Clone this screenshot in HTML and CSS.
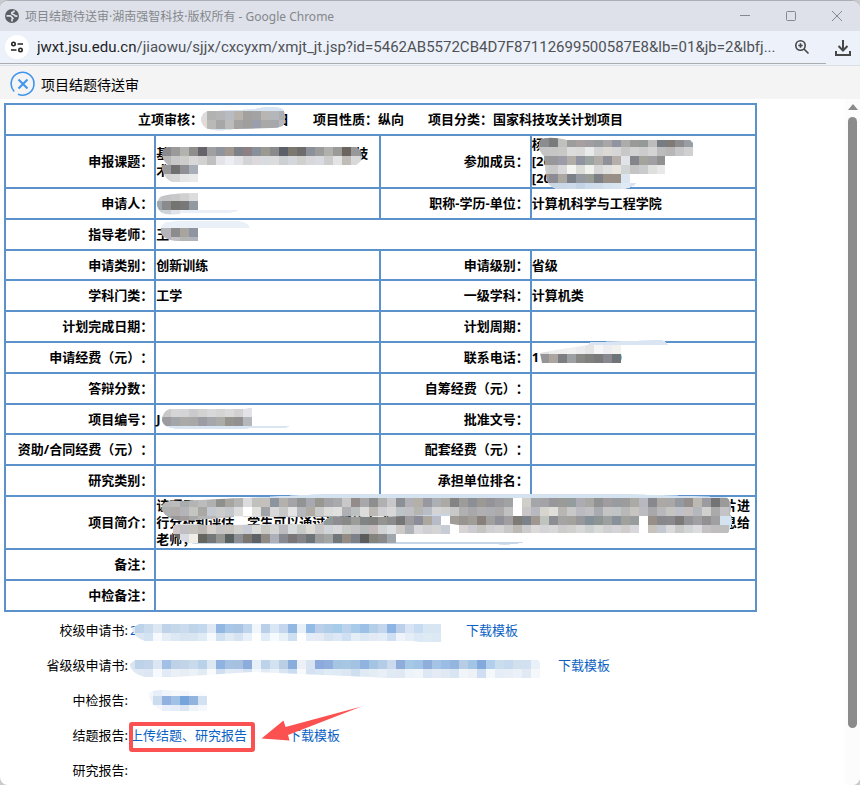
FILE: index.html
```html
<!DOCTYPE html>
<html lang="zh-CN">
<head>
<meta charset="utf-8">
<title>项目结题待送审·湖南强智科技·版权所有</title>
<link rel="stylesheet" href="styles.css">
</head>
<body>
<div class="window">
  <header class="titlebar">
    <svg class="globe" viewBox="0 0 14 14" aria-hidden="true"><circle cx="7" cy="7" r="7" fill="#5b5f64"/><path d="M1.500 6.800H5.200C6.800 6.800 6.500 9 8 9M7 12.500V10.300C7 9.500 8.300 9.700 8.300 8.700M9.300 1.500C9.300 3.600 6.600 2.600 6.600 4.300 6.600 6 9.200 5 9.700 6.400 10.100 7.500 11.300 7 12.500 7" fill="none" stroke="#dee1e9" stroke-width="1.700"/></svg>
    <span class="caption">项目结题待送审·湖南强智科技·版权所有 - Google Chrome</span>
    <div class="controls">
      <button type="button" aria-label="最小化"><svg viewBox="0 0 12 12"><path d="M1 5.500h10"/></svg></button>
      <button type="button" aria-label="最大化"><svg viewBox="0 0 12 12"><rect x="1.500" y="1.500" width="9" height="9" rx="1"/></svg></button>
      <button type="button" aria-label="关闭"><svg viewBox="0 0 12 12"><path d="M1 1l10 10M11 1L1 11"/></svg></button>
    </div>
  </header>
  <div class="addressbar">
    <div class="address">
      <button type="button" class="site" aria-label="网站信息"><svg viewBox="0 0 14 14"><circle cx="3.500" cy="4" r="1.700"/><path d="M7.500 4H13M1 10h5.500"/><circle cx="10.500" cy="10" r="1.700"/></svg></button>
      <span class="url"><b>jwxt.jsu.edu.cn</b>/jiaowu/sjjx/cxcyxm/xmjt_jt.jsp?id=5462AB5572CB4D7F87112699500587E8&amp;lb=01&amp;jb=2&amp;lbfj...</span>
      <button type="button" class="tool" aria-label="缩放"><svg viewBox="0 0 16 16"><circle cx="6.500" cy="6.500" r="4.700"/><path d="M10 10l4.500 4.500M4.300 6.500h4.400M6.500 4.300v4.400"/></svg></button>
    </div>
    <button type="button" class="download" aria-label="下载"><svg viewBox="0 0 18 18"><path d="M9 1v10M4.500 7L9 11.500 13.500 7M2 12v4h14v-4"/></svg></button>
  </div>
  <div class="heading">
    <svg viewBox="0 0 26 26" aria-hidden="true"><path d="M4.200 20.500A11.400 11.400 0 1 1 8 23.200" fill="none" stroke="#3f94ee" stroke-width="1.600"/><path d="M8.500 8.500l9 9M17.500 8.500l-9 9" stroke="#3f94ee" stroke-width="2"/></svg>
    <h1>项目结题待送审</h1>
  </div>
  <div class="body">
    <main>
      <table>
        <colgroup><col class="label"><col class="value"><col class="label"><col class="value"></colgroup>
        <tbody>
          <tr><td colspan="4"><div class="summary"><span class="review"><span>立项审核：</span><span>日</span></span><span>项目性质：纵向</span><span>项目分类：国家科技攻关计划项目</span></div></td></tr>
          <tr><th>申报课题：</th><td><div class="line topic"><span>基</span><span>技</span></div><div class="line">术</div></td><th>参加成员：</th><td>杨<br>[20<br>[20</td></tr>
          <tr><th>申请人：</th><td></td><th>职称-学历-单位：</th><td>计算机科学与工程学院</td></tr>
          <tr><th>指导老师：</th><td colspan="3">王</td></tr>
          <tr class="compact"><th>申请类别：</th><td>创新训练</td><th>申请级别：</th><td>省级</td></tr>
          <tr><th>学科门类：</th><td>工学</td><th>一级学科：</th><td>计算机类</td></tr>
          <tr><th>计划完成日期：</th><td></td><th>计划周期：</th><td></td></tr>
          <tr><th>申请经费（元）：</th><td></td><th>联系电话：</th><td><div class="line phone"><span>1</span><span>0</span></div></td></tr>
          <tr><th>答辩分数：</th><td></td><th>自筹经费（元）：</th><td></td></tr>
          <tr class="compact"><th>项目编号：</th><td>J</td><th>批准文号：</th><td></td></tr>
          <tr><th>资助/合同经费（元）：</th><td></td><th>配套经费（元）：</th><td></td></tr>
          <tr><th>研究类别：</th><td></td><th>承担单位排名：</th><td></td></tr>
          <tr><th>项目简介：</th><td colspan="3"><div class="line brief"><span>该项目</span><span>片进</span></div><div class="line brief"><span>行分析和评估　学生可以通过问题的方式</span><span>息给</span></div><div class="line">老师，</div></td></tr>
          <tr><th>备注：</th><td colspan="3"></td></tr>
          <tr><th>中检备注：</th><td colspan="3"></td></tr>
        </tbody>
      </table>
      <dl class="files">
        <div><dt>校级申请书:</dt><dd><a href="#" class="school">2</a><a href="#">下载模板</a></dd></div>
        <div><dt>省级级申请书:</dt><dd><span class="province"></span><a href="#">下载模板</a></dd></div>
        <div><dt>中检报告:</dt><dd></dd></div>
        <div><dt>结题报告:</dt><dd><a href="#" class="upload">上传结题、研究报告</a><a href="#">下载模板</a></dd></div>
        <div><dt>研究报告:</dt><dd></dd></div>
      </dl>
    </main>
    <div class="scrollbar" aria-hidden="true"><i class="up"></i><i class="thumb"></i></div>
  </div>
  <svg class="overlay" width="860" height="785" viewBox="0 0 860 785" aria-hidden="true">
    <g id="mosaics"></g>
    <rect x="131" y="724" width="122" height="26" rx="1" fill="none" stroke="#fb5151" stroke-width="4"/>
    <path d="M361.500 706.500L285.500 727 283.500 720.500 261.500 738.500 289.500 740.500 288 735z" fill="#fb5151"/>
  </svg>
</div>
<script src="mosaic.js"></script>
</body>
</html>
```
FILE: styles.css
```css
* { box-sizing: border-box; }
body {
  margin: 0;
  background: #c9cbd0;
  color: #000;
  font: 13px/17px "Noto Sans", "Noto Sans CJK SC", sans-serif;
  text-spacing-trim: space-all;
}
.window {
  position: relative;
  display: flex;
  flex-direction: column;
  height: 100vh;
  overflow: hidden;
  background: #fff;
  border-top: 1px solid #aaaeb5;
  border-radius: 8px;
}
button {
  display: flex;
  align-items: center;
  justify-content: center;
  padding: 0;
  border: 0;
  background: none;
}
button svg { fill: none; stroke: #474747; }
.titlebar {
  display: flex;
  flex: none;
  align-items: center;
  height: 30px;
  padding-left: 5px;
  gap: 6px;
  background: #dee1e9;
}
.globe { width: 14px; height: 14px; }
.caption {
  flex: 1;
  color: #84878c;
  font-size: 12px;
  white-space: nowrap;
}
.controls { display: flex; }
.controls button { width: 46px; height: 30px; }
.controls svg { width: 12px; height: 12px; stroke: #85888d; }
.addressbar {
  display: flex;
  flex: none;
  height: 35px;
  background: #ecf1fa;
  border-bottom: 1px solid #dcdfe4;
}
.address {
  display: flex;
  flex: 1;
  align-items: center;
  min-width: 0;
  height: 33px;
  padding: 0 14px 0 5px;
  gap: 8px;
  border-bottom: 1px solid #aaacaf;
}
.site {
  flex: none;
  width: 24px;
  height: 24px;
  border-radius: 50%;
  background: #fff;
}
.site svg { width: 14px; height: 14px; stroke: #222; stroke-width: 1.6; }
.url {
  flex: 1;
  min-width: 0;
  overflow: hidden;
  color: #505256;
  font-family: Roboto, "Noto Sans", sans-serif;
  font-size: 15px;
  line-height: 20px;
  white-space: nowrap;
}
.url b { color: #1f1f1f; font-weight: 400; }
.tool { flex: none; width: 20px; }
.tool svg { width: 16px; height: 16px; stroke-width: 1.6; }
.download { width: 34px; height: 33px; }
.download svg { width: 18px; height: 18px; stroke-width: 2; }
.heading {
  display: flex;
  flex: none;
  align-items: center;
  height: 33px;
  padding: 3px 10px 0;
  gap: 5px;
  background: #f4f4f4;
}
.heading svg { width: 26px; height: 26px; }
.heading h1 { margin: 0; font-size: 14px; font-weight: 400; }
.body { display: flex; flex: 1; min-height: 0; }
main { flex: 1; min-width: 0; padding: 4px; overflow: hidden; }
table {
  width: 100%;
  max-width: 753px;
  border-collapse: collapse;
  table-layout: fixed;
  font-weight: 700;
}
.label { width: 20%; }
.value { width: 30%; }
tr { height: 31px; }
.compact { height: 30px; }
th, td { padding: 0; border: 2px solid #5b92cb; }
th { padding-right: 1px; text-align: right; white-space: nowrap; }
.summary { display: flex; justify-content: center; gap: 24px; }
.review { display: flex; justify-content: space-between; width: 151px; }
.line { display: flex; white-space: nowrap; }
.topic { justify-content: space-between; width: 212px; }
.phone { justify-content: space-between; width: 90px; }
.brief { justify-content: space-between; padding-right: 5px; }
.files { margin: 1px 0 0; }
.files div { display: flex; align-items: center; height: 35px; }
.files dt { width: 124px; text-align: right; }
.files dd { display: flex; margin: 0; padding-left: 2px; }
a { color: #0b62c4; text-decoration: none; white-space: nowrap; }
.school { width: 336px; }
.province { width: 428px; }
.upload { width: 158px; }
.scrollbar {
  display: flex;
  flex-direction: column;
  align-items: center;
  width: 15px;
  padding: 5px 0 57px;
  gap: 7px;
  background: #fcfcfc;
}
.up {
  border: 5px solid transparent;
  border-top: 0;
  border-bottom: 6px solid #8b8b8b;
}
.thumb { flex: 1; width: 9px; border-radius: 5px; background: #8b8b8b; }
.overlay {
  position: absolute;
  top: -1px;
  left: 0;
  pointer-events: none;
}
```
FILE: mosaic.js
```js
// Redaction brush strokes: 9px blocks, clipped to the outline of each stroke.
const CELL = 9;
const strokes = [
  { x: 198, y: 102, back: "#d8e4f1",
    clip: "M208 111L254 109C264 106 278 106 283 109Q285 111 285 122Q284 128 272 128L236 129Q215 133 206 128Q201 124 201 119Q202 112 208 111Z",
    rows: ["", "dcdcdc b2b2b0 b5b5b7 b9bbc2 b8b2ad a2a1a0 a3a3a4 b9b5b3 b3b7bc aaadb2", "e2dad5 b9b9b7 a7a7a7 bcbcbc a4a3a1 a19f9c 9a9fab a9a8a6 a7a8ab b4b7bb"] },
  { x: 162, y: 147,
    clip: "M168 147H356Q362 150 362 156T356 165H168Q162 160 162 154T168 147Z",
    rows: ["8a8a8e 9a9a9a b2b2ae 8e8e8c 66636a a0a0a2 90949c a09890 7c8288 8c8084 88909a 9a9a92 8a8a8c 5c6068 7c7870 6e6c6c 8c9098 9c9c9c b0b0ac 9a9a98 6c645e 98989a 888c90",
      "b8b8b8 c8c8c8 cdcdcb d8d8d8 d2d2d2 c0c0c0 e4e4e8 eceef4 e4e4e8 d2d4d6 dcd8dc d8dce0 dcdcdc ccd0d2 d4d8dc d0d0cc d8d8dc d8dce0 cccccc e4e4e4 c0bcb8 d8d8d8 c8ccd0"] },
  { x: 162, y: 165, clip: "M162 165H198V182H172Q165 179 162 170Z",
    rows: ["989898 707070 909094 a8aeb8", "d4d4d4 d8d8d8 e6e6e6 eaeaea"] },
  { x: 153, y: 192, back: "#ebf0f8",
    clip: "M160 197Q170 193 198 193V210H239Q236 213 225 213H184Q172 216 162 213Q156 208 157 202Z",
    rows: ["c8c8c8 c4c4c6 c8c8c8 d0d0d0 dcdcdc", "9ca7b0 8b8b8d 747470 787878 909aa0", "c6cfd6 ccd3d9 e0e4ea"] },
  { x: 153, y: 219, back: "#eaf0f8",
    clip: "M166 222Q180 220 238 221Q248 222 250 228H198V241H176Q166 240 162 235Q158 227 166 222Z",
    rows: ["", "a6a8b0 b4b4ba 8c8c8c a8a4a0 8e94a0", "b0b2b8 b4b4b8 c0c0c4 b4b4b4 b0b3bb"] },
  { x: 531, y: 129, back: "#d8e4f0",
    clip: "M540 140Q545 137 555 138T566 140H690L693 143V156H665V174H630V183H637Q632 189 620 189H556Q547 186 546 176L544 156Q537 150 540 140Z",
    rows: ["989a9c 8e9092 8a8c8e 808284",
      "8b8f91 8a8c8e 787a7c c0c0bc 9c9e9e a8a0a0 a09ea0 989c9e a8a6a6 9094a0 acacaa 9c9a98 949898 bcbcbc 767c82 807a76 8c8c8e 989ea4",
      "b8b8b8 c4c4c4 c6c6c6 c8c8c4 dcdcdc dadada e8eaec d4d4d4 dcd8d4 d6d6d6 c8c8c8 d2d2d2 cccccc d4d4d4 bcbcbc b8b6b6 c6c6c8 d0d0d0",
      "a0a4a4 9a9a98 98989c 9c9ca8 b0aea6 9094a0 9ca4a2 b0acaa 909098 b6aeaa e0e4e8 84848c a4a49c a0a0a4 909092",
      "ccccce cccccc c8c8c8 d8d8da f4f4f0 dcdcd8 f0f2ee d6d6d6 e0e0e0 e8e4de d0d4d4 c4c4c4 c8cacc dee0de e8e8e8",
      "9a9496 9a9496 8c8a92 aaa8a0 7c8088 9498a0 989c96 7c8084 989086 989086 dce6f0",
      "ccd8e6 ccd8e6 ccd7e4 c8d8e8 ccdaea c4d4e6 ccdcec d0dcea d4e2f0 d8e4f0 e0eaf4"] },
  { x: 540, y: 336, back: "#d9e5f2", clip: "M590 342L655 340Q666 339 668 345H588Z", rows: [""] },
  { x: 540, y: 345, clip: "M540 353Q560 349 575 347L588 345H621V363H542Z",
    rows: ["e0e0e0 ececec eeeeee f0f0f0 ececee e6e6e6 f6f6f6 eeeef2 f2f2ee", "959598 aca49e 7c7e82 9ca0a2 888884 80807e 7a7a7a 888890 707476"] },
  { x: 162, y: 408, back: "#d9e5f2",
    clip: "M170 409H243L252 408V426H290Q286 429 276 428H252Q244 430 236 429H176Q164 428 162 421Q162 411 170 409Z",
    rows: ["c8c8c6 d6d6d6 d4d4d6 cacacc d2d2d0 d8d8da d4d4d2 dadada d2d0d0 e2e2e8", "9c9ca0 a2a6aa acaaa8 a8a8a8 9c9ca4 a4a8ac acaca8 989490 929090 b4b8bc"] },
  { x: 162, y: 489, back: "#d5e3f1",
    clip: "M162 505Q166 500 180 501L260 497 320 494H630L726 497Q733 501 730 514Q735 522 728 533H459V525L395 516 300 517 235 517 180 521Q165 518 162 510Z",
    rows: ["",
      "b8b8b8 bcbcbc a8acac b4b4b4 bcbcbc b0b0b0 8e908e a8a4a0 b4b4b4 dcdcde c0c0bc c4c0bc 8c94a0 b4b0ac a4a4a8 909494 a8a8b0 989890 a4a4a8 a8aaae c8c8c8 948c8a a8a8aa 8c8e90 b0b0b0 c8c8ca 8c9096 b0b0b6 b4b0a8 9898a0 acb0b4 aca8a4 848484 9c9c9a 8c9096 9c9894 949498 9c9ca0 a0a2a4 ffffff d0cec8 a4a6aa a4a4a8 98989c 9a9a96 949c9e acacb2 a8a8a4 909294 a09ca0 989ca0 9c9c9e acaaa4 b8b8c0 88898e aca8a4 a8a8a8 949aa0 948e8c bcb8b2 9a9aa0 747474 9a9a9a b0b0b2",
      "b0b0b0 b0acac b4b4b8 c4c4c0 aaa8a4 c4c8d0 cccccc c4c8cc dcdcdc ffffff e0e0de a0a2a6 d8d8da c8c8c8 e4e4e4 b4b8bc b0aca4 cacaca dcdcda e0e0de b0b0b4 bcc0c0 dcdcda bcb8b4 d0d0d4 d8d8d8 bcc4c8 c0c0c4 b4b4b0 b8bcc4 d4d4d4 d0d0d0 c8c8c8 b0b0b0 a8a8aa b0b0b2 acaeb2 acaaaa c0c0c0 ffffff c8c6c6 b8b8c0 d8d4ce e0dfda b8b6b2 c8c8c8 babac0 c0c0c2 a8acb0 c4c4c4 c0c4c4 b8b8b8 c8c4c2 bcbcc0 a8a8aa b8b8bc c4c4c0 c0c0c8 c4c0c0 b4b8bc d0d0ce aaaaaa c4c4c6 b8b8b8",
      "a0a0a0 989696 a09c9c a8a8a8 b4b4b4 b8b8b8 c8c8c8 b8b8b8 f4f4f6 dcdcdc d8d8d8 cccccc d0d0d0 c0c0c0 c8c8c8 b0b0b0 d0d0d0 a8a8a8 909898 8e8e92 888a88 9c9c98 808484 80807e 949492 8c8c8c 767676 9c9c9e 8c8c98 aca8a0 b8bcc8 ffffff a09c98 989490 a09c98 88807a a0a09e 90909a a09ea0 7c7c74 7c828a a09890 c0c4be 8c8e94 a4a4a4 a4a29c 98989c 849098 8c9494 9ca09e 88909c a0a09c 989c9c ffffff 989088 88888c 8a8a8e 7c7a78 949498 a0a0a4 929090 a0a0a2",
      "d0d0d0 d0d0d0 d0d0d0 d0d0d0 d0d0d0 d0d0d0 d0d0d0 d0d0d0 d0d0d0 d0d0d0 d0d0d0 d0d0d0 d0d0d0 d0d0d0 d0d0d0 d0d0d0 d0d0d0 d0d0d0 d0d0d0 d0d0d0 d0d0d0 d0d0d0 d0d0d0 d0d0d0 e0e4e8 d0ccca b0b4b8 d8d8dc d0d0d4 d4d4d4 c8ccd4 f6faff d4d4d4 d8d4d4 ccccd0 c4c4c0 d0d0d2 d4d4d4 c8c8c8 bcb8b4 cccccc dcdad8 d4d4d8 d8d8d8 cccccc d0d0ce d8d8d8 ccd0d0 d8dad8 d0d0d2 d4d4d8 d0cccc d8d8dc ffffff c8c2bc c4c8d0 dadada c8c8c8 d0d4d4 dcdce0 c4c2c2 bebebe bebebe"] },
  { x: 171, y: 516, back: "#c7d6e8",
    clip: "M173 526Q180 522 205 525L320 524 330 517 380 517 450 514V534H396V542H525Q515 546 490 544H195Q179 542 173 534Z",
    rows: ["dddddd dddddd dddddd dddddd ffffff f4f4f4 eeeeee eeeeee dddddd dddddd dddddd dddddd dddddd dddddd dddddd dddddd b8b8b8 909898 8e8e92 888a88 9c9c98 808484 80807e 949492 8c8c8c 767676 9c9c9e 8c8c98 aca8a0 b8bcc8 ffffff",
      "d0c8c8 c0c0c4 c4c0bc bcb8b4 d4d0cc c4c4c4 c8c4c0 d0d0ce c8ccd4 dcdcda c8c8c4 d4d4d4 bcbcc0 d8dcdc c8cac8 dcdad4 c8c8c8 d0d4d8 d8d8da c8ccc8 c4c4c6 b8bcbc c4bcbc d0d4d4 dcdfe2 ccc9c6 b0b4b8 d8d8dc d0d0d4 d4d4d4 c8ccd4 f6faff",
      "686868 d8dce2 f0ece6 666660 747878 949490 586060 8c9094 7c7670 5c6266 908a86 acb0b8 888890 7a7678 848488 6c7478 9c9c9c a4a6a6 70767a 948c84 7c8088 5c5c5c 84847e 8a8a8a a0a8ae"] },
  { x: 126, y: 624, clip: "M139 624H441V642H420L412 641H160L145 641Q133 637 132 628Z",
    rows: ["e0e8f2 bdd3ea cadbed dce7f3 c0d3e9 c5d8ea c9dbed bfd3e9 c3d8ec dee9f4 91b7e2 a9c7e6 a9c5e3 bed5ed f0f6fb bad0e9 d8e7f3 c3d6ed 91b7e2 e7eff8 94bbe6 bbcfea b1cce8 a5cce8 bcd2ec a8cbea 9cc0e6 b4cfe8 c4d6ec 8db4e2 bcd0ea d8e4f3 c7dbf1 d8e6f4 d8e6f3",
      "e8eef6 dce6f2 d3e3f2 f6faff e5edf7 dce8f3 d8e5f1 d8e6f2 dfecf6 f6faff d2e1f2 e1ebf5 d6e4f2 e8f1f9 ffffff e0ecf7 f5fbff e8f0f8 cedff1 ffffff e4edf7 e4ebf5 d8e3f2 dce8f5 cfe0f4 e4eef7 dce8f3 e4eaf5 e2edf7 cfe0f4 f0f4fa e5edf7 dce8f5 deebf5 dce9f4"] },
  { x: 126, y: 651, clip: "M135 660H315V654H333V660H538Q540 661 540 664V678H385L370 677 252 672 175 677H145Q130 673 130 664Z",
    rows: ["",
      "d8e4f2 bdd1e9 c1d4e9 dce6f2 a2c0e6 bdd1e7 c2d4e7 c8daeb b9d2e9 dde8f2 8fb2e0 a5c2e2 a6c1e0 8caddb e8f0f7 bdd3e9 d2e2f0 bacfe6 89aedb edf1f7 d8e4f2 8caadd 91afdc a5c6e2 a7c7e3 a4c3e2 90b3df a4c4e4 b5cce6 cbdbed 90acda a5c8e6 a1c3e6 90aedb a4c3e5 9bbce4 94b5dd b7cde6 a3c5e5 84aadd b1cfed cadded c5d9ef d2e0ed d2e0f1 e8f0f8",
      "e0e8f2 e0e8f4 dde6f2 f6faff e1eaf5 ebf0f6 e6edf5 ebf1f6 e0ebf4 f8fafc cfdff0 e1ebf5 e0e9f5 d3e1f1 f5f8fc e2ebf5 ebf2f9 d9e5f3 c9dcf0 f7f9fc d4e2f2 d9e6f3 e0ebf5 deeaf5 dce7f3 cedff0 e0eaf5 e4ecf6 e8eff7 dfeaf5 e0e8f4 ecf4fa f0f5fa dee8f4 e4ebf5 e0e8f4 d8e5f3 f0f5f9 eef2f7 cfdff1 f4f8fb e5edf6 e7eef6 eaf1f8 e0e9f4 f5f8fb"] },
  { x: 144, y: 687, clip: "M148 694Q151 690 162 690L189 691 207 693V711H162L153 705Z",
    rows: ["f4f8fb e5eef9 f0f4fb f6f8fc f3f7fb fafcfe fafdff", "f0f4fa cbdcee 91b1df a2c1e6 76a5dc 92b3dd d3e2f2", "ffffff f4f7fd e9effa e6edf8 dce6f2 eff4f9 f4f8fc"] },
];

const NS = "http://www.w3.org/2000/svg";
const make = (name, attrs, parent) => {
  const node = document.createElementNS(NS, name);
  for (const key in attrs) node.setAttribute(key, attrs[key]);
  return parent.appendChild(node);
};
const layer = document.getElementById("mosaics");
strokes.forEach((stroke, n) => {
  const clip = make("clipPath", { id: "stroke" + n }, layer);
  make("path", { d: stroke.clip }, clip);
  const group = make("g", { "clip-path": `url(#stroke${n})`, "shape-rendering": "crispEdges" }, layer);
  if (stroke.back) make("path", { d: stroke.clip, fill: stroke.back }, group);
  stroke.rows.forEach((row, r) => row.split(" ").filter(Boolean).forEach((color, c) =>
    make("rect", { x: stroke.x + c * CELL, y: stroke.y + r * CELL, width: CELL, height: CELL, fill: "#" + color }, group)));
});
```
